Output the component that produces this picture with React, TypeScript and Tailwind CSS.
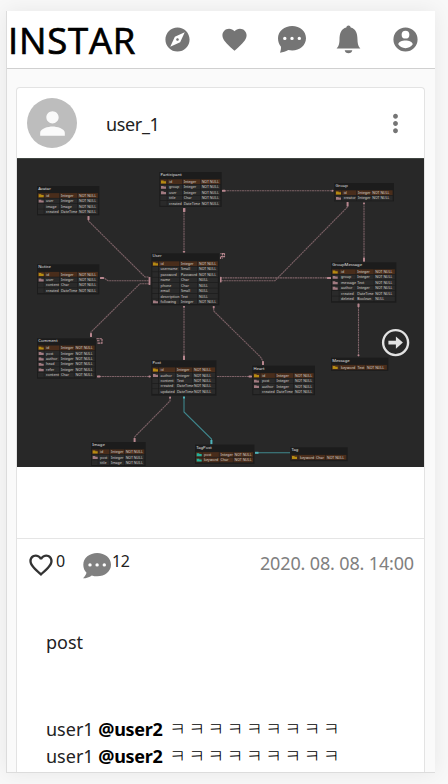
import { MdExplore, MdFavorite, MdFavoriteBorder, MdPerson, MdMoreVert } from "react-icons/md";

type Row = [string, string, string, string];
type Table = {
  name: string;
  x: number;
  y: number;
  r: number;
  b: number;
  first: number;
  cols: [number, number, number];
  rows: Row[];
};

// Row: key kind (p primary, f foreign, t teal), field, type, nullability
const NN = "NOT NULL";
const tables: Table[] = [
  { name: "Avatar", x: 37, y: 186, r: 99.3, b: 215.3, first: 195.5, cols: [46, 61, 79], rows: [["p", "id", "Integer", NN], ["f", "user", "Integer", NN], ["", "image", "Image", NN], ["", "created", "DateTime", NN]] },
  { name: "Participant", x: 159.3, y: 172, r: 221.7, b: 206.9, first: 181.7, cols: [169, 183.7, 201.7], rows: [["p", "id", "Integer", NN], ["f", "group", "Integer", NN], ["f", "user", "Integer", NN], ["", "title", "Char", NN], ["", "created", "DateTime", NN]] },
  { name: "Group", x: 334.3, y: 183, r: 394, b: 201.4, first: 192.7, cols: [343.7, 358, 372.3], rows: [["p", "id", "Integer", NN], ["f", "creator", "Integer", NN]] },
  { name: "Notice", x: 37, y: 264.3, r: 99.3, b: 294.5, first: 274.3, cols: [46, 61, 79], rows: [["p", "id", "Integer", NN], ["f", "user", "Integer", NN], ["", "content", "Char", NN], ["", "created", "DateTime", NN]] },
  { name: "Comment", x: 37, y: 338.3, r: 96, b: 378.7, first: 347.9, cols: [46, 61, 75.5], rows: [["p", "id", "Integer", NN], ["f", "post", "Integer", NN], ["f", "author", "Integer", NN], ["f", "head", "Integer", NN], ["f", "refer", "Integer", NN], ["", "content", "Char", NN]] },
  { name: "User", x: 151.3, y: 253.3, r: 219.3, b: 305.3, first: 263.7, cols: [160.5, 181, 199], rows: [["p", "id", "Integer", NN], ["", "username", "Small", NN], ["", "password", "Password", NN], ["", "name", "Char", "NULL"], ["", "phone", "Char", "NULL"], ["", "email", "Small", "NULL"], ["", "description", "Text", "NULL"], ["f", "following", "Integer", NN]] },
  { name: "GroupMessage", x: 331, y: 262.3, r: 396.3, b: 302.7, first: 271.7, cols: [341, 357.3, 375.3], rows: [["p", "id", "Integer", NN], ["f", "group", "Integer", NN], ["f", "message", "Text", NN], ["f", "author", "Integer", NN], ["", "created", "DateTime", NN], ["", "deleted", "Boolean", "NULL"]] },
  { name: "Message", x: 331, y: 357.7, r: 388.3, b: 370.9, first: 367.3, cols: [341, 357.5, 367], rows: [["p", "keyword", "Text", NN]] },
  { name: "Post", x: 151.3, y: 360.3, r: 216.5, b: 395.7, first: 369.8, cols: [160.5, 177, 194], rows: [["p", "id", "Integer", NN], ["f", "author", "Integer", NN], ["", "content", "Text", NN], ["", "created", "DateTime", NN], ["", "updated", "DateTime", NN]] },
  { name: "Heart", x: 252.3, y: 365.7, r: 315, b: 395.2, first: 375.5, cols: [262, 276.5, 295], rows: [["p", "id", "Integer", NN], ["f", "post", "Integer", NN], ["f", "author", "Integer", NN], ["", "created", "DateTime", NN]] },
  { name: "Image", x: 91, y: 442, r: 145.7, b: 466, first: 451.8, cols: [100, 111, 125.7], rows: [["p", "id", "Integer", NN], ["f", "post", "Integer", NN], ["", "title", "Image", NN]] },
  { name: "TagPost", x: 195, y: 444.5, r: 254.5, b: 463.9, first: 454.5, cols: [204, 220.5, 234.5], rows: [["t", "post", "Integer", NN], ["t", "keyword", "Char", NN]] },
  { name: "Tag", x: 290.3, y: 447.3, r: 347.7, b: 461.2, first: 457.3, cols: [300, 316, 327], rows: [["p", "keyword", "Char", NN]] },
];

const keyColors: Record<string, string> = { p: "#b58a12", f: "#a17a80", t: "#24b19b" };

const links = [
  "M88.5 217V221L145 277H149",
  "M100 278H104L108 280.7H149",
  "M91 336V332L140 283.7H149",
  "M184 208V253",
  "M222 190.7H334",
  "M347.5 202V207L275 280.7H220",
  "M220 277.9H331",
  "M364 203V262",
  "M358.5 304V357",
  "M184 306V360",
  "M213.7 306V311L259 355.5Q263 359 263 365",
  "M97 376.5H151",
  "M217 376.5H252",
  "M170 397V401L134.5 437V442",
];

const pinkEnds = [
  [87.5, 216, 2, 4], [100, 277, 4, 2], [90, 333, 2, 4], [183, 208, 2.4, 4], [222, 189.8, 3.5, 2],
  [346.6, 202, 2, 4.5], [363, 257.5, 2, 4], [357.5, 303.5, 2, 3.5], [182.8, 251, 2.4, 1.4], [183, 306, 2, 1.6],
  [148.6, 277, 1.8, 8], [220, 276.8, 1.6, 5.6], [327, 277, 4, 2], [183, 355.5, 2, 4.5], [212.8, 306, 1.8, 2.4],
  [262, 361, 2, 4], [97, 375.6, 3.5, 1.8], [148.5, 375.6, 2, 1.8], [248.5, 375.6, 3.5, 1.8],
  [169.2, 396.5, 1.8, 2], [133.6, 438, 2, 4.4], [331.5, 189.8, 1.6, 2], [363, 202.5, 2, 1.4], [357.5, 354.5, 2, 1.4],
];

function TableBox({ t }: { t: Table }) {
  return (
    <g>
      <rect x={t.x} y={t.y} width={t.r - t.x} height={t.b - t.y} fill="#1c1c1c" />
      <text x={t.x + 1.2} y={t.y + 4} fontSize="4.2" fill="#e0e0e0">{t.name}</text>
      {t.rows.map((row, i) => {
        const cy = t.first + i * 5.42;
        const brown = row[0] === "t" || (i === 0 && row[0] === "p");
        const fill = brown ? "#492d1b" : "#2a2a2a";
        const edges = [t.x + 1, t.cols[0] - 1.6, t.cols[1] - 1, t.cols[2] - 1, t.r - 0.8];
        return (
          <g key={i}>
            {edges.slice(0, 4).map((e, k) => (
              <rect key={k} x={e} y={cy - 2.4} width={edges[k + 1] - e - 0.6} height="4.8" fill={fill} />
            ))}
            {row[0] && (
              <path
                d={`M${t.x + 1.7} ${cy - 1.2}h2.6v.7h2.4v2.2h-5z`}
                fill={keyColors[row[0]]}
              />
            )}
            {[1, 2, 3].map((k) => (
              <text
                key={k}
                x={t.cols[k - 1]}
                y={cy + 1.3}
                fontSize={k === 3 ? 3.5 : 3.6}
                fill="#d8d2ce"
              >
                {row[k]}
              </text>
            ))}
          </g>
        );
      })}
    </g>
  );
}

function Diagram() {
  return (
    <svg viewBox="17 158 407 309" className="block h-[309px] w-[407px]" fontFamily="'Noto Sans', sans-serif">
      <rect x="17" y="158" width="407" height="309" fill="#282828" />
      <path d="M17 158.4H424" stroke="#4c544e" strokeWidth=".8" />
      <g fill="none" stroke="#7c6166" strokeWidth="1.1">
        {links.map((d) => <path key={d} d={d} strokeDasharray="2 .5" />)}
      </g>
      <g fill="none" stroke="#3f868c" strokeWidth="1.1">
        <path d="M184 397V412L211.5 439V444M255 452.7H290" />
      </g>
      <g fill="#b8878f">
        {pinkEnds.map(([x, y, w, h], i) => <rect key={i} x={x} y={y} width={w} height={h} rx=".6" />)}
      </g>
      <g fill="#4fb4ba">
        <rect x="183" y="396.5" width="2" height="2" />
        <rect x="210.4" y="440" width="2" height="4.2" />
        <rect x="255" y="451.8" width="3.5" height="2" />
      </g>
      <g fill="none" stroke="#b8878f" strokeWidth="1.1">
        <path d="M220.5 259v-2.4h4v-3h-4M222.4 253v5.5" strokeDasharray="2 .5" />
        <path d="M96.500 338.700h5.500v4.400h-5M97 340.800h3" strokeDasharray="2.4 .5" />
      </g>
      {tables.map((t) => <TableBox key={t.name} t={t} />)}
      <circle cx="395.6" cy="342.6" r="12.5" fill="none" stroke="#e2e2e2" strokeWidth="2.4" />
      <path d="M388.400 340.700h7.500v-4.300l7 6.200-7 6.200v-4.300h-7.500z" fill="#e2e2e2" />
    </svg>
  );
}

function ChatIcon() {
  return (
    <svg viewBox="0 0 28 27" className="h-[27px] w-[28px]" fill="currentColor">
      <path
        fillRule="evenodd"
        d="M14.200 0C21.900 0 28 5.200 28 12.200s-6.200 12.200-13.800 12.200c-1.400 0-2.700-.1-3.900-.4C7.700 25.700 5 26.200 2 26.700c.7-1.800 1.100-4 1-6C1.200 18.400 0 15.500 0 12.200 0 5.200 6.500 0 14.200 0zM6.800 10.700a1.700 1.700 0 1 0 0 3.400a1.700 1.700 0 1 0 0-3.400zM14 10.700a1.700 1.700 0 1 0 0 3.400a1.700 1.700 0 1 0 0-3.400zM21.300 10.700a1.700 1.700 0 1 0 0 3.400a1.700 1.700 0 1 0 0-3.400z"
      />
    </svg>
  );
}

function CommentCountIcon() {
  return (
    <svg viewBox="0 0 28 26" className="mt-[14px] h-[26px] w-[28px] text-[#808080]" fill="currentColor">
      <path
        fillRule="evenodd"
        d="M14.200 0C21.900 0 28 5.100 28 11.700s-6.100 11.600-13.800 11.600c-2 0-3.800-.3-5.400-.9C6.400 24.200 3.300 25.200 0 25.300c1.800-1.700 3-3.500 3.500-5.500C1.400 17.600.3 14.800.3 11.700.3 5.100 6.500 0 14.200 0zM7 10.200a1.700 1.700 0 1 0 0 3.400a1.700 1.700 0 1 0 0-3.400zM14.100 10.200a1.700 1.700 0 1 0 0 3.400a1.700 1.700 0 1 0 0-3.400zM21.300 10.200a1.700 1.700 0 1 0 0 3.400a1.700 1.700 0 1 0 0-3.400z"
      />
    </svg>
  );
}

function BellIcon() {
  return (
    <svg viewBox="0 0 25 29" className="h-[29px] w-[25px]" fill="currentColor">
      <path d="M8.700 25.300h7.600c-.3 1.900-1.700 3-3.800 3s-3.500-1.100-3.800-3zM.6 23.500c1.800-2 2.700-3.700 2.900-8.500C3.600 7.500 5.500 3.700 10.300 2.500 10.500 1.100 11.300.4 12.500.4s2 .7 2.200 2.100c4.800 1.200 6.700 5 6.800 12.500.2 4.800 1.100 6.500 2.900 8.500z" />
    </svg>
  );
}

function AccountIcon() {
  return (
    <svg viewBox="0 0 24 24" className="h-[29px] w-[29px]" fill="currentColor">
      <path
        fillRule="evenodd"
        d="M12 2a10 10 0 1 0 0 20a10 10 0 1 0 0-20zM12 4.800a3.200 3.200 0 1 1 0 6.400a3.200 3.200 0 1 1 0-6.400zM12 19.200c-2.700 0-4.900-1.200-6-3.200.1-2 3.200-3.100 6-3.100s5.900 1.100 6 3.100c-1.100 2-3.300 3.200-6 3.200z"
      />
    </svg>
  );
}

function Comment() {
  return (
    <p className="whitespace-nowrap">
      user1 <b className="font-bold tracking-[-0.3px] text-black">@user2</b>{" "}
      <span className="ml-[2px] font-['Noto_Sans_CJK_KR',sans-serif] text-[18px] font-light tracking-[2.65px] text-black">ㅋㅋㅋㅋㅋㅋㅋㅋㅋ</span>
    </p>
  );
}

export default function App() {
  return (
    <div className="h-[784px] w-[448px] overflow-hidden bg-[#f8f8f8] pl-[6px] pt-[11px] font-['Noto_Sans',sans-serif] text-[#222]">
      <div className="flex h-[762px] w-[429px] flex-col overflow-hidden border-b border-l border-[#dcdcdc] bg-[#fafafa] shadow-[0_0_20px_rgba(0,0,0,0.07)]">
        <header className="flex h-[58px] shrink-0 items-center border-b border-[#d0d0d0] bg-white text-[#757575]">
          <h1 className="w-[142px] pl-px font-['Open_Sans',sans-serif] text-[36.5px] leading-[54px] tracking-[0.8px] text-black [-webkit-text-stroke:0.7px_black]">INSTAR</h1>
          <nav className="-mt-px flex">
            <span className="flex w-[57px] items-center justify-center"><MdExplore size={29} /></span>
            <span className="flex w-[57px] items-center justify-center"><MdFavorite size={29} /></span>
            <span className="flex w-[57px] items-center justify-center"><ChatIcon /></span>
            <span className="flex w-[57px] items-center justify-center"><BellIcon /></span>
            <span className="flex w-[57px] items-center justify-center"><AccountIcon /></span>
          </nav>
        </header>
        <article className="ml-[9px] mt-[18px] flex w-[409px] grow flex-col rounded-t-[4px] border border-b-0 border-[#e3e3e3] bg-white">
          <div className="flex h-[70px] shrink-0 items-center pl-[10px] pr-[14px]">
            <div className="flex size-[50px] items-center justify-center rounded-full bg-[#bdbdbd] text-[#fafafa]">
              <MdPerson size={37} />
            </div>
            <span className="ml-[29px] mt-[2px] grow text-[18px] tracking-[-0.35px]">user_1</span>
            <MdMoreVert size={29} className="text-[#757575]" />
          </div>
          <Diagram />
          <div className="mt-[71px] flex h-[52px] shrink-0 items-start border-t border-[#e5e5e5] px-[10px] text-[16px]">
            <MdFavoriteBorder size={28} className="mt-[12px] text-[#333]" />
            <span className="ml-px mt-[10px] w-[27px] tracking-[-0.5px]">0</span>
            <CommentCountIcon />
            <span className="ml-px mt-[10px] grow tracking-[-0.5px]">12</span>
            <time className="mt-[11px] text-[18px] tracking-[-0.15px] text-[#808080]">2020. 08. 08. 14:00</time>
          </div>
          <div className="pl-[29px] text-[18px] leading-[26px]">
            <p className="mt-[39px]">post</p>
            <div className="mt-[60px]">
              <Comment />
              <Comment />
            </div>
          </div>
        </article>
      </div>
    </div>
  );
}
